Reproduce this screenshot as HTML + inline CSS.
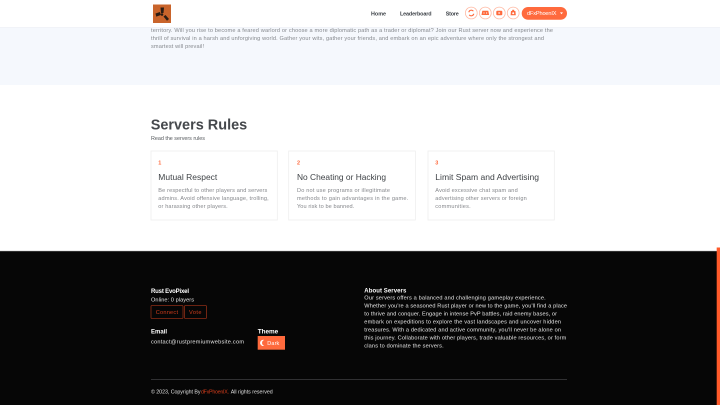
<!DOCTYPE html>
<html lang="en"><head><meta charset="utf-8"><title>Rust EvoPixel</title>
<style>
html,body{margin:0;padding:0;width:720px;height:405px;overflow:hidden;background:#fff}
svg{display:block;position:absolute;left:0;top:0;filter:blur(.2px)}
text{font-family:"Liberation Sans",sans-serif}
.p{font-size:5.6px;fill:#85888d}
.c{font-size:5.6px;fill:#85878b}
.t{font-size:8.6px;fill:#3f4347}
.n{font-size:5.5px;fill:#ff6a3d;font-weight:bold}
.f{font-size:5.6px;fill:#e8e8e8}
.h{font-size:6px;fill:#fff;font-weight:bold}
.nav{font-size:5.4px;fill:#3a3f45;font-weight:bold}
</style></head><body>
<svg width="720" height="405" viewBox="0 0 720 405" xmlns="http://www.w3.org/2000/svg">
<rect width="720" height="405" fill="#fff"/>
<!-- hero tail -->
<rect x="0" y="27" width="720" height="58" fill="#f5f8fd"/>
<text class="p" x="151" y="32" textLength="402" lengthAdjust="spacing">territory. Will you rise to become a feared warlord or choose a more diplomatic path as a trader or diplomat? Join our Rust server now and experience the</text>
<text class="p" x="151" y="40" textLength="393" lengthAdjust="spacing">thrill of survival in a harsh and unforgiving world. Gather your wits, gather your friends, and embark on an epic adventure where only the strongest and</text>
<text class="p" x="151" y="48" textLength="53" lengthAdjust="spacing">smartest will prevail!</text>
<!-- header -->
<rect x="0" y="0" width="720" height="27" fill="#fff"/>
<rect x="153" y="4.5" width="18" height="18.5" fill="#c9642b"/>
<g fill="#2a1c14">
<path d="M160.500 7.500h3.500l-.5 5.500h-2.500z"/>
<path d="M155.500 13.500l4.500-1.500.8 3-4.500 1.600z"/>
<path d="M163.500 16.500l2-1.500 3.500 4-2 1.700z"/>
<circle cx="162" cy="14.500" r="1.300"/>
</g>
<text class="nav" x="371" y="15.300" textLength="15" lengthAdjust="spacing">Home</text>
<text class="nav" x="400" y="15.300" textLength="31.500" lengthAdjust="spacing">Leaderboard</text>
<text class="nav" x="445.700" y="15.300" textLength="13" lengthAdjust="spacing">Store</text>
<g fill="#fff" stroke="#ffb9a3" stroke-width=".8">
<circle cx="471.300" cy="13" r="5.900"/><circle cx="485.300" cy="13" r="5.900"/><circle cx="499.300" cy="13" r="5.900"/><circle cx="513.200" cy="13" r="5.900"/>
</g>
<path d="M468.800 12.200a2.600 2.600 0 0 1 4.600-1M473.800 13.800a2.600 2.600 0 0 1-4.600 1" fill="none" stroke="#ff6a3d" stroke-width="1.100"/>
<path d="M482.300 10.800h6l.8 4.200h-7.600z" fill="#ff6a3d"/>
<circle cx="484" cy="13" r=".6" fill="#fff"/><circle cx="486.600" cy="13" r=".6" fill="#fff"/>
<rect x="496.300" y="10.800" width="6" height="4.400" rx="1" fill="#ff6a3d"/>
<path d="M498.600 11.900l1.800 1.100-1.800 1.100z" fill="#fff"/>
<path d="M511 11h4.400l.4 4.200h-5.200z" fill="#ff6a3d"/>
<circle cx="513.200" cy="13.300" r="1" fill="#fff"/>
<rect x="512.200" y="9.800" width="2" height="1.500" fill="#ff6a3d"/>
<rect x="521.700" y="7" width="45.300" height="12.800" rx="6.400" fill="#ff6a3d"/>
<text x="527" y="15.200" font-size="5.600" fill="#fff" textLength="29.500" lengthAdjust="spacing">dFxPhoenIX</text>
<path d="M560 12.400h3l-1.500 1.800z" fill="#fff"/>
<rect x="0" y="27" width="720" height=".6" fill="#eef0f4"/>
<!-- rules -->
<text x="150.700" y="129.300" font-size="15.200" font-weight="bold" fill="#45484c" textLength="96.500" lengthAdjust="spacingAndGlyphs">Servers Rules</text>
<text x="151" y="139.800" font-size="5.400" fill="#55585c" textLength="54" lengthAdjust="spacing">Read the servers rules</text>
<g fill="#fff" stroke="#eeeeee" stroke-width=".8">
<rect x="151" y="151" width="126.300" height="69"/>
<rect x="288.700" y="151" width="126.700" height="69"/>
<rect x="428" y="151" width="126.300" height="69"/>
</g>
<text class="n" x="158.300" y="164.300">1</text>
<text class="t" x="158.300" y="180.200" textLength="59" lengthAdjust="spacingAndGlyphs">Mutual Respect</text>
<text class="c" x="158.300" y="192" textLength="109" lengthAdjust="spacing">Be respectful to other players and servers</text>
<text class="c" x="158.300" y="200" textLength="110.400" lengthAdjust="spacing">admins. Avoid offensive language, trolling,</text>
<text class="c" x="158.300" y="208" textLength="69.400" lengthAdjust="spacing">or harassing other players.</text>
<text class="n" x="297" y="164.300">2</text>
<text class="t" x="297" y="180.200" textLength="89" lengthAdjust="spacingAndGlyphs">No Cheating or Hacking</text>
<text class="c" x="297" y="192" textLength="93" lengthAdjust="spacing">Do not use programs or illegitimate</text>
<text class="c" x="297" y="200" textLength="111.300" lengthAdjust="spacing">methods to gain advantages in the game.</text>
<text class="c" x="297" y="208" textLength="57.300" lengthAdjust="spacing">You risk to be banned.</text>
<text class="n" x="435.300" y="164.300">3</text>
<text class="t" x="435.300" y="180.200" textLength="103.700" lengthAdjust="spacingAndGlyphs">Limit Spam and Advertising</text>
<text class="c" x="435.300" y="192" textLength="82.400" lengthAdjust="spacing">Avoid excessive chat spam and</text>
<text class="c" x="435.300" y="200" textLength="91.400" lengthAdjust="spacing">advertising other servers or foreign</text>
<text class="c" x="435.300" y="208" textLength="35.400" lengthAdjust="spacing">communities.</text>
<!-- footer -->
<rect x="0" y="251" width="720" height="154" fill="#060606"/>
<rect x="0" y="250.500" width="720" height=".7" fill="#d8d8d8"/>
<text class="h" x="151" y="293" textLength="38" lengthAdjust="spacing">Rust EvoPixel</text>
<text class="f" x="151" y="301.700" textLength="43" lengthAdjust="spacing">Online: 0 players</text>
<rect x="151" y="305.500" width="32" height="13" rx="1" fill="none" stroke="#8c2d16" stroke-width=".8"/>
<rect x="184.500" y="305.500" width="22" height="13" rx="1" fill="none" stroke="#8c2d16" stroke-width=".8"/>
<text x="155.700" y="314" font-size="5.600" fill="#d33d1c" textLength="22.300" lengthAdjust="spacing">Connect</text>
<text x="189" y="314" font-size="5.600" fill="#d33d1c" textLength="12.500" lengthAdjust="spacing">Vote</text>
<text x="151" y="333.300" font-size="6.600" font-weight="bold" fill="#fff" textLength="16" lengthAdjust="spacingAndGlyphs">Email</text>
<text class="f" x="151" y="343.300" textLength="93" lengthAdjust="spacing">contact@rustpremiumwebsite.com</text>
<text x="257.700" y="333.500" font-size="6.600" font-weight="bold" fill="#fff" textLength="20.500" lengthAdjust="spacingAndGlyphs">Theme</text>
<rect x="257.700" y="336" width="27.300" height="13.700" fill="#ff6a3d"/>
<path d="M264.300 340a3 3 0 0 0 0 5.800a3 3 0 0 1-2.200-5.800a3 3 0 0 1 2.200 0z" fill="#fff"/>
<text x="267.300" y="345" font-size="5.500" fill="#fff" textLength="12" lengthAdjust="spacing">Dark</text>
<text class="h" x="364.300" y="292.300" textLength="42" lengthAdjust="spacing">About Servers</text>
<text class="f" x="364.300" y="299.400" textLength="181.400" lengthAdjust="spacing">Our servers offers a balanced and challenging gameplay experience.</text>
<text class="f" x="364.300" y="307.400" textLength="202.700" lengthAdjust="spacing">Whether you're a seasoned Rust player or new to the game, you'll find a place</text>
<text class="f" x="364.300" y="315.400" textLength="192.700" lengthAdjust="spacing">to thrive and conquer. Engage in intense PvP battles, raid enemy bases, or</text>
<text class="f" x="364.300" y="323.400" textLength="196.700" lengthAdjust="spacing">embark on expeditions to explore the vast landscapes and uncover hidden</text>
<text class="f" x="364.300" y="331.400" textLength="196.700" lengthAdjust="spacing">treasures. With a dedicated and active community, you'll never be alone on</text>
<text class="f" x="364.300" y="339.400" textLength="202" lengthAdjust="spacing">this journey. Collaborate with other players, trade valuable resources, or form</text>
<text class="f" x="364.300" y="347.400" textLength="79.400" lengthAdjust="spacing">clans to dominate the servers.</text>
<rect x="151" y="379" width="416" height=".8" fill="#3a3a3e"/>
<text x="151" y="393.700" font-size="5.300" fill="#e0e0e0" textLength="49.500" lengthAdjust="spacing">© 2023, Copyright By</text>
<text x="201" y="393.700" font-size="5.300" fill="#d33d1c" textLength="28" lengthAdjust="spacing">dFxPhoenIX.</text>
<text x="230.700" y="393.700" font-size="5.300" fill="#e0e0e0" textLength="42" lengthAdjust="spacing">All rights reserved</text>
<rect x="716.700" y="247.500" width="3.300" height="157.500" fill="#ff5a2a"/>
</svg>
</body></html>
